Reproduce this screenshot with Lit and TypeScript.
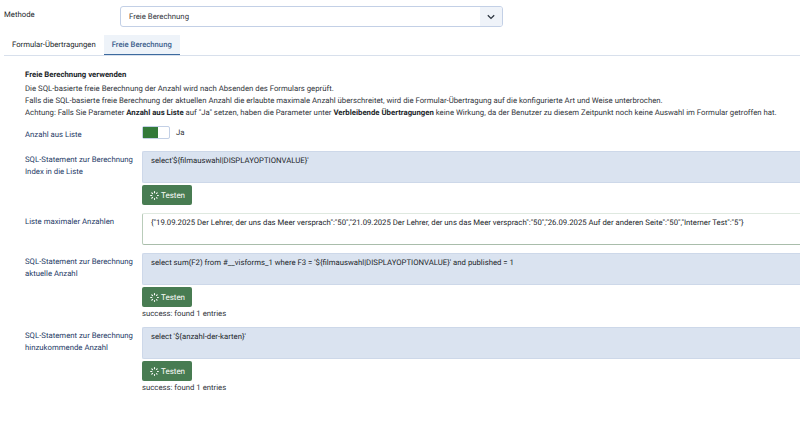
import { LitElement, html, css, svg } from "lit";
import { customElement } from "lit/decorators.js";

const spinner = svg`<svg class="spin" viewBox="0 0 12 12" width="9" height="9" aria-hidden="true">
  <g fill="none" stroke="#fff" stroke-width="1.5" stroke-linecap="round">
    <path d="M6 .9v1.4"/><path d="M9.6 2.4 8.7 3.3"/><path d="M11.1 6H10"/><path d="M9.4 9.4l-.6-.6"/>
    <path d="M6 11.1V10"/><path d="M2.4 9.6l1-1"/><path d="M.9 6h1.5"/><path d="M2.4 2.4l1 1"/>
  </g></svg>`;

@customElement("app-root")
export class AppRoot extends LitElement {
  static styles = css`
    :host { display: block; width: 800px; height: 425px; background: #fff; overflow: hidden;
      font-family: Roboto, "Liberation Sans", sans-serif; font-size: 7.78px; color: #22262a; text-rendering: geometricPrecision; }
    .page { height: 391px; overflow: hidden; padding-top: 6px; box-sizing: border-box; }
    .method { display: flex; padding-left: 4px; height: 22px; }
    .method-label { width: 116px; padding-top: 3px; line-height: 12px; color: #22262a; }
    .select { width: 383px; height: 21px; box-sizing: border-box; border: 1px solid #c3d0e6; border-radius: 3px;
      display: flex; align-items: stretch; overflow: hidden; }
    .select-text { flex: 1; padding-left: 8px; line-height: 19px; color: #30343a; }
    .select-btn { width: 22px; background: #eff3f9; display: flex; align-items: center; justify-content: center; }
    .tabs { display: flex; margin: 7px 0 0 4px; height: 21px; border-bottom: 1px solid #d8e0ec; box-sizing: border-box; }
    .tab { padding: 0 8px; line-height: 20px; color: #22262a; font-size: 7.7px; }
    .tab.active { background: #eef3f9; color: #3d5f8d; font-weight: 500; box-shadow: inset 0 -1px 0 #3d6a9e; height: 20px; }
    .content { padding: 13px 0 0 25px; }
    h4 { margin: 0 0 2px; font-size: 7.78px; line-height: 12px; font-weight: 700; color: #22262a; }
    .desc { margin: 0; line-height: 12px; color: #30343a; }
    .desc b { font-weight: 700; color: #22262a; }
    .row { display: grid; grid-template-columns: 117px 1fr; }
    .label { line-height: 11.5px; color: #1e3a66; padding-top: 3px; }
    .toggle-row { margin-top: 7px; height: 25px; }
    .toggle-wrap { display: flex; gap: 6px; }
    .toggle { width: 28px; height: 13px; box-sizing: border-box; border: 1px solid #c3d0e6; border-radius: 2px; background: #fff; display: flex; }
    .toggle i { display: block; width: 15px; background: #337a3a; }
    .ja { line-height: 12px; color: #30343a; padding-top: 1px; }
    .field { height: 32px; box-sizing: border-box; background: #dae3f0; border: 1px solid #cdd8e9; border-right: 0;
      border-radius: 2px 0 0 2px; padding: 3px 8px; line-height: 12px; font-size: 7.75px; color: #22262a; white-space: nowrap; overflow: hidden; }
    .field.valid { background: #fff; border-color: #dfe9e0 #fff #a9bdab #b9ccba; }
    .btn { display: inline-flex; align-items: center; gap: 2px; height: 20px; width: 50px; box-sizing: border-box;
      margin-top: 2px; padding-left: 8px; background: #487c52; border-radius: 2px; color: #fff; font-size: 8px; }
    .spin { flex: none; }
    .stack { display: flex; flex-direction: column; align-items: flex-start; }
    .stack .field { width: 100%; }
    .row.r { margin-bottom: 8px; }
    .msg { line-height: 12px; color: #30343a; margin-top: 1px; }
    .row.tight { margin-bottom: 7px; }
  `;

  private test() { return html`<div class="btn">${spinner}<span>Testen</span></div>`; }

  render() {
    return html`<div class="page">
      <div class="method">
        <div class="method-label">Methode</div>
        <div class="select">
          <div class="select-text">Freie Berechnung</div>
          <div class="select-btn"><svg width="8" height="6" viewBox="0 0 8 6" aria-hidden="true"><path d="M.8 1.2 4 4.4l3.2-3.2" fill="none" stroke="#2d3540" stroke-width="1.3"/></svg></div>
        </div>
      </div>
      <div class="tabs">
        <div class="tab">Formular-Übertragungen</div>
        <div class="tab active">Freie Berechnung</div>
      </div>
      <div class="content">
        <h4>Freie Berechnung verwenden</h4>
        <p class="desc">Die SQL-basierte freie Berechnung der Anzahl wird nach Absenden des Formulars geprüft.<br>
        Falls die SQL-basierte freie Berechnung der aktuellen Anzahl die erlaubte maximale Anzahl überschreitet, wird die Formular-Übertragung auf die konfigurierte Art und Weise unterbrochen.<br>
        Achtung: Falls Sie Parameter <b>Anzahl aus Liste</b> auf "Ja" setzen, haben die Parameter unter <b>Verbleibende Übertragungen</b> keine Wirkung, da der Benutzer zu diesem Zeitpunkt noch keine Auswahl im Formular getroffen hat.</p>
        <div class="row toggle-row">
          <div class="label">Anzahl aus Liste</div>
          <div class="toggle-wrap"><div class="toggle"><i></i></div><div class="ja">Ja</div></div>
        </div>
        <div class="row r">
          <div class="label">SQL-Statement zur Berechnung<br>Index in die Liste</div>
          <div class="stack"><div class="field">select'\${filmauswahl|DISPLAYOPTIONVALUE}'</div>${this.test()}</div>
        </div>
        <div class="row r">
          <div class="label">Liste maximaler Anzahlen</div>
          <div class="stack"><div class="field valid">{"19.09.2025 Der Lehrer, der uns das Meer versprach":"50","21.09.2025 Der Lehrer, der uns das Meer versprach":"50","26.09.2025 Auf der anderen Seite":"50","Interner Test":"5"}</div></div>
        </div>
        <div class="row tight">
          <div class="label">SQL-Statement zur Berechnung<br>aktuelle Anzahl</div>
          <div class="stack"><div class="field">select sum(F2) from #__visforms_1 where F3 = '\${filmauswahl|DISPLAYOPTIONVALUE}' and published = 1</div>${this.test()}<div class="msg">success: found 1 entries</div></div>
        </div>
        <div class="row">
          <div class="label">SQL-Statement zur Berechnung<br>hinzukommende Anzahl</div>
          <div class="stack"><div class="field">select '\${anzahl-der-karten}'</div>${this.test()}<div class="msg">success: found 1 entries</div></div>
        </div>
      </div>
    </div>`;
  }
}
